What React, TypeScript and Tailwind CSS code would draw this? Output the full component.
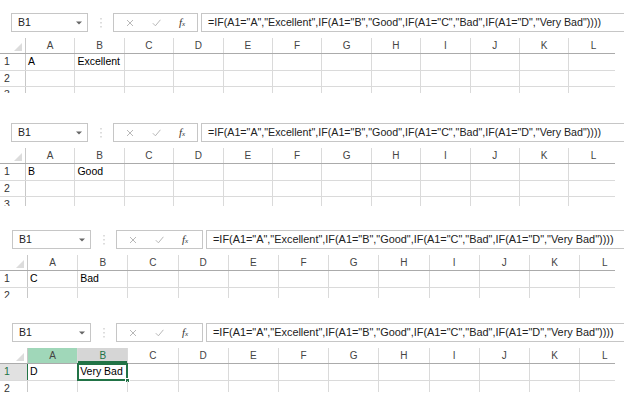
import React from "react";

const cols = ["A", "B", "C", "D", "E", "F", "G", "H", "I", "J", "K", "L"];
const formula =
  '=IF(A1="A","Excellent",IF(A1="B","Good",IF(A1="C","Bad",IF(A1="D","Very Bad"))))';

const gridCols = {
  narrow: "grid grid-cols-[26px_repeat(12,49.4px)]",
  wide: "grid grid-cols-[28px_repeat(12,50.2px)]",
};

const font = "font-['Liberation_Sans',Arial,sans-serif]";

const Toolbar = ({ wide }: { wide?: boolean }) => {
  return (
    <div className={`flex h-[19px] items-stretch ${wide ? "pl-[12px]" : "pl-[11px]"}`}>
      <div
        className={`flex items-center justify-between border border-[#c6c6c6] pl-[6px] pr-[5px] ${
          wide ? "w-[79px]" : "w-[77px]"
        }`}
      >
        <span className="text-[10.5px] text-[#222]">B1</span>
        <svg width="6" height="4" viewBox="0 0 6 4">
          <path d="M0 0.5h6L3 3.5z" fill="#666" />
        </svg>
      </div>
      <div className="flex w-[25px] items-center justify-center">
        <svg width="2" height="10" viewBox="0 0 2 10">
          <rect x="0.5" y="0" width="1" height="1.5" fill="#bbb" />
          <rect x="0.5" y="4" width="1" height="1.5" fill="#bbb" />
          <rect x="0.5" y="8" width="1" height="1.5" fill="#bbb" />
        </svg>
      </div>
      <div
        className={`flex items-center border border-[#c6c6c6] ${wide ? "w-[87px]" : "w-[85px]"}`}
      >
        <svg className="ml-[12px]" width="8" height="8" viewBox="0 0 8 8">
          <path d="M1 1L7 7M7 1L1 7" stroke="#b0b0b0" strokeWidth="0.9" />
        </svg>
        <svg className="ml-[18px]" width="9" height="8" viewBox="0 0 9 8">
          <path d="M0.8 4.2L3.4 6.8L8.4 0.8" stroke="#b0b0b0" strokeWidth="0.9" fill="none" />
        </svg>
        <span className="ml-[18px] font-['Liberation_Serif',serif] text-[11px] italic leading-none text-[#333]">
          f<span className="text-[7px]">x</span>
        </span>
      </div>
      <div className="ml-[3px] flex flex-1 items-center border-y border-l border-[#c6c6c6] pl-[6px]">
        <span
          className={`whitespace-nowrap text-[#222] ${wide ? "text-[10.9px]" : "text-[10.7px]"}`}
        >
          {formula}
        </span>
      </div>
    </div>
  );
};

type SheetProps = {
  a: string;
  b: string;
  wide?: boolean;
  selected?: boolean;
  box: string;
};

const Sheet = ({ a, b, wide, selected, box }: SheetProps) => {
  const row = wide ? gridCols.wide : gridCols.narrow;
  return (
    <div className={`${box} overflow-hidden`}>
      <Toolbar wide={wide} />
      <div className="mt-[6px] w-[615px] overflow-hidden">
        {/* column headers */}
        <div className={`${row} h-[16px] border-b border-[#ababab]`}>
          <div className="relative border-r border-[#c8c8c8]">
            <svg className="absolute bottom-[2px] right-[3px]" width="8" height="8" viewBox="0 0 8 8">
              <path d="M8 0V8H0z" fill="#dcdcdc" />
            </svg>
          </div>
          {cols.map((c) => {
            let cls = "bg-white text-[#444]";
            if (selected && c === "A") cls = "bg-[#a0d7b9] text-[#444]";
            if (selected && c === "B")
              cls = "bg-[#d6d6d6] text-[#217346] shadow-[inset_0_-2px_0_#217346]";
            return (
              <div
                key={c}
                className={`flex items-center justify-center border-r border-[#dadada] text-[10px] ${cls}`}
              >
                {c}
              </div>
            );
          })}
        </div>
        {[1, 2, 3].map((n) => (
          <div key={n} className={`${row} h-[16.5px] border-b border-[#dadada]`}>
            <div
              className={`flex items-center border-r pl-[4px] text-[10.5px] ${
                selected && n === 1
                  ? "border-[#217346] bg-[#e1e1e1] text-[#217346]"
                  : "border-[#c8c8c8] text-[#333]"
              }`}
            >
              {n}
            </div>
            {cols.map((c) => (
              <div
                key={c}
                className="relative flex items-center border-r border-[#dadada] pl-[2px] text-[10.5px] text-black"
              >
                {n === 1 && c === "A" ? a : null}
                {n === 1 && c === "B" ? b : null}
                {selected && n === 1 && c === "B" && (
                  <>
                    <div className="absolute -left-[1px] -top-[1px] bottom-[-1px] right-[-1px] border-2 border-[#217346]" />
                    <div className="absolute -bottom-[3px] -right-[3px] h-[5px] w-[5px] border border-white bg-[#217346]" />
                  </>
                )}
              </div>
            ))}
          </div>
        ))}
      </div>
    </div>
  );
};

const App = () => {
  return (
    <div className={`flex h-[404px] w-[624px] flex-col overflow-hidden bg-white ${font}`}>
      <Sheet a="A" b="Excellent" box="mt-[13px] h-[80px]" />
      <Sheet a="B" b="Good" box="mt-[30px] h-[83px]" />
      <Sheet a="C" b="Bad" wide box="mt-[24px] h-[68px]" />
      <Sheet a="D" b="Very Bad" wide selected box="mt-[25px] h-[69px]" />
    </div>
  );
};

export default App;
